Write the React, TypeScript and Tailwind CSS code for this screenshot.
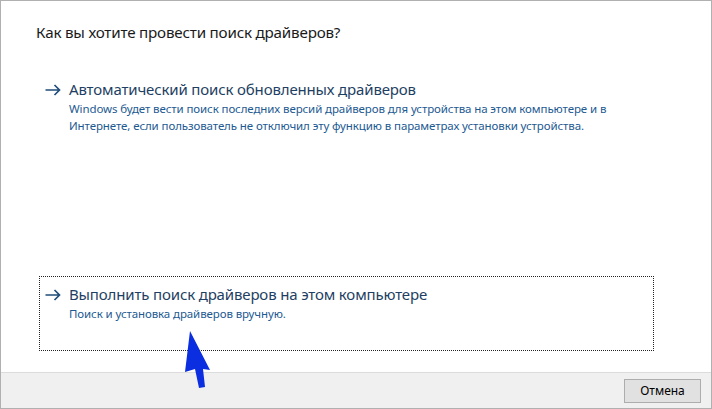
import React from 'react'

const font = { fontFamily: '"Noto Sans", "Open Sans", "Liberation Sans", sans-serif' }

function LinkArrow() {
  return (
    <svg width="16" height="12" viewBox="0 0 16 12" className="shrink-0">
      <path d="M0.5 6 H14.5 M9.5 1 L14.5 6 L9.5 11" fill="none" stroke="#1f4e7a" strokeWidth="1.7" />
    </svg>
  )
}

interface OptionProps {
  title: string
  lines: string[]
  focused?: boolean
  className?: string
}

function CommandLink({ title, lines, focused, className }: OptionProps) {
  return (
    <div
      className={
        'ml-[38px] w-[615px] flex gap-[8px] pl-[5px] pt-[6px] ' +
        (focused ? 'border border-dotted border-[#222] ' : 'border border-transparent ') +
        (className ?? '')
      }
    >
      <div className="pt-[6px]">
        <LinkArrow />
      </div>
      <div className="flex flex-col">
        <span className="text-[15px] leading-[22px] text-[#1e3f63] tracking-[-0.15px]">{title}</span>
        {lines.map((l) => (
          <span key={l} className="text-[11.5px] leading-[17px] text-[#1d5a92] tracking-[-0.1px]">
            {l}
          </span>
        ))}
      </div>
    </div>
  )
}

export default function App() {
  return (
    <div style={font} className="w-[712px] h-[409px] border border-[#b0b0b0] bg-white flex flex-col overflow-hidden relative">
      <div className="flex-1 flex flex-col">
        <h1 className="pl-[35px] pt-[20px] text-[15.2px] leading-[22px] text-[#1a1a1a] tracking-[-0.2px]">
          Как вы хотите провести поиск драйверов?
        </h1>
        <CommandLink
          className="mt-[28px] h-[70px]"
          title="Автоматический поиск обновленных драйверов"
          lines={[
            'Windows будет вести поиск последних версий драйверов для устройства на этом компьютере и в',
            'Интернете, если пользователь не отключил эту функцию в параметрах установки устройства.',
          ]}
        />
        <CommandLink
          focused
          className="mt-[135px] h-[75px]"
          title="Выполнить поиск драйверов на этом компьютере"
          lines={['Поиск и установка драйверов вручную.']}
        />
      </div>
      <div className="h-[36px] border-t border-[#dcdcdc] bg-[#f0f0f0] flex items-start justify-end pr-[10px] pt-[6px]">
        <button className="w-[77px] h-[24px] border border-[#adadad] bg-[#e1e1e1] text-[12px] text-black">
          Отмена
        </button>
      </div>
      <svg className="absolute left-[180px] top-[326px]" width="35" height="65" viewBox="0 0 35 65">
        <polygon points="9,4 4,45 14,42 18,61 24,60 22,42 29,43" fill="#0a2ee0" />
      </svg>
    </div>
  )
}
